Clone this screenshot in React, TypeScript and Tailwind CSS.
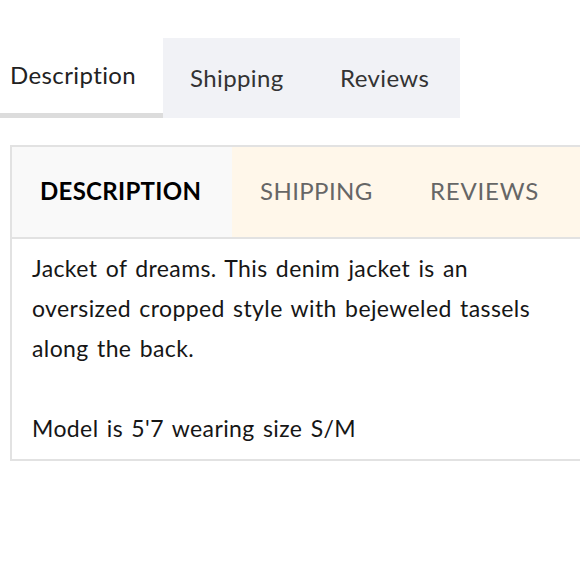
import { useState } from 'react';

const TABS = ['Description', 'Shipping', 'Reviews'];

const App = () => {
    const [active, setActive] = useState(0);
    const [active2, setActive2] = useState(0);

    return (
        <div className="w-[580px] h-[580px] bg-white overflow-hidden font-['Lato',sans-serif] text-[#222]">
            {/* Pill style tabs */}
            <div className="flex pt-[38px]">
                {TABS.map((t, i) => (
                    <button
                        key={t}
                        onClick={() => setActive(i)}
                        className={
                            i === active
                                ? 'w-[163px] h-[80px] pl-[10px] pb-[2px] text-left text-[24px] tracking-[0.4px] text-[#222] bg-white border-b-[5px] border-[#dcdcdc]'
                                : i === 1
                                    ? 'w-[150px] h-[80px] pl-[27px] text-left text-[24px] tracking-[0.4px] text-[#333] bg-[#f1f2f6]'
                                    : 'w-[147px] h-[80px] pl-[27px] text-left text-[24px] tracking-[0.4px] text-[#333] bg-[#f1f2f6]'
                        }
                    >
                        {t}
                    </button>
                ))}
            </div>

            {/* Boxed tabs */}
            <div className="mt-[27px] ml-[10px] w-[600px] border-2 border-[#e2e2e2]">
                <div className="flex h-[92px] border-b-2 border-[#e2e2e2]">
                    {TABS.map((t, i) => (
                        <button
                            key={t}
                            onClick={() => setActive2(i)}
                            className={
                                i === active2
                                    ? 'w-[220px] pl-[28px] pb-[2px] text-left text-[24px] tracking-[0.3px] font-bold uppercase text-black bg-[#f9f9f9]'
                                    : i === 1
                                        ? 'w-[170px] pl-[28px] pb-[2px] text-left text-[24px] tracking-[0.4px] uppercase text-[#666] bg-[#fff7ea]'
                                        : 'flex-1 pl-[28px] pb-[2px] text-left text-[24px] tracking-[0.8px] uppercase text-[#666] bg-[#fff7ea]'
                            }
                        >
                            {t}
                        </button>
                    ))}
                </div>
                <div className="w-[560px] pl-[20px] pr-[10px] pt-[9px] pb-[11px] text-[23px] tracking-[0.4px] [word-spacing:2px] leading-[40px] text-[#161616]">
                    <p>Jacket of dreams. This denim jacket is an oversized cropped style with bejeweled tassels along the back.</p>
                    <p className="mt-[40px]">Model is 5'7 wearing size S/M</p>
                </div>
            </div>
        </div>
    );
};

export default App;
